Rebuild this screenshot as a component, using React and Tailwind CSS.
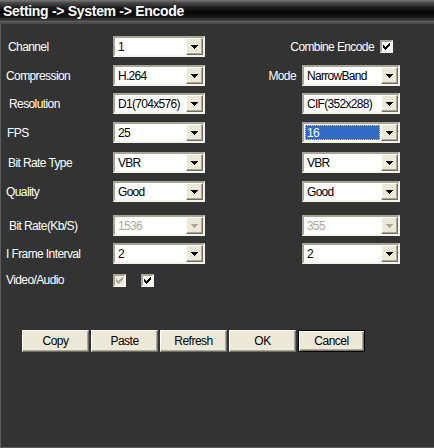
import React from "react";

const FONT = "font-['Liberation_Sans',Arial,sans-serif]";

function Arrow({ disabled }) {
    return (
        <svg width="7" height="4" viewBox="0 0 7 4" shapeRendering="crispEdges">
            <path d="M0 0h7v1H0z M1 1h5v1H1z M2 2h3v1H2z M3 3h1v1H3z" fill={disabled ? "#aca899" : "#000"} />
        </svg>
    );
}

function Check({ color = "#000" }) {
    return (
        <svg width="7" height="7" viewBox="0 0 7 7" shapeRendering="crispEdges">
            <path d="M6 0h1v3H6z M5 1h1v3H5z M4 2h1v3H4z M3 3h1v3H3z M2 4h1v3H2z M1 3h1v3H1z M0 2h1v3H0z" fill={color} />
        </svg>
    );
}

function Select({ value, className, disabled, focused }) {
    return (
        <div className={`flex h-[21px] border-2 border-t-[#a7a596] border-l-[#a7a596] border-b-[#f4f3ec] border-r-[#f4f3ec] bg-white ${className}`}>
            <div className="flex-1 flex items-center px-[1px]">
                <div
                    className={`flex-1 h-[15px] flex items-center pl-[2px] text-[12px] tracking-[-0.7px] leading-none ${
                        focused
                            ? "bg-[#316ac5] text-white outline outline-1 outline-dotted outline-[#e8d27a] -outline-offset-1"
                            : disabled
                            ? "text-[#aca899]"
                            : "text-black"
                    }`}
                >
                    {value}
                </div>
            </div>
            <div className="w-[17px] flex items-center justify-center bg-[#ece9d8] border border-t-white border-l-white border-b-[#716f64] border-r-[#716f64] shadow-[inset_-1px_-1px_0_#aca899]">
                <Arrow disabled={disabled} />
            </div>
        </div>
    );
}

function CheckBox({ disabled }) {
    return (
        <div
            className={`w-[13px] h-[13px] flex items-center justify-center border-2 border-t-[#a7a596] border-l-[#a7a596] border-b-[#f4f3ec] border-r-[#f4f3ec] ${
                disabled ? "bg-[#ece9d8]" : "bg-white"
            }`}
        >
            <Check color={disabled ? "#aca899" : "#000"} />
        </div>
    );
}

function Row({ label, labelPad, left, right, rightLabel, className }) {
    return (
        <div className={`flex items-center h-[21px] ${className}`}>
            <div className={`w-[112px] text-white text-[12px] tracking-[-0.6px] ${labelPad}`}>{label}</div>
            {left}
            <div className="w-[195px] flex items-center justify-end gap-[6px]">
                {rightLabel && <span className="text-white text-[12px] tracking-[-0.6px]">{rightLabel}</span>}
                {right}
            </div>
        </div>
    );
}

const BUTTONS = ["Copy", "Paste", "Refresh", "OK", "Cancel"];

export default function App() {
    return (
        <div className={`w-[434px] h-[448px] bg-[#333333] overflow-hidden flex flex-col ${FONT}`}>
            <div className="h-[22px] shrink-0 flex items-center pl-[3px] bg-[linear-gradient(to_bottom,#7a7a7a_0%,#4a4a4a_12%,#1e1e1e_35%,#050505_55%,#141414_75%,#3a3a3a_92%,#6a6a6a_100%)]">
                <span className="text-white font-bold text-[14px] tracking-[-0.3px] leading-none">Setting -&gt; System -&gt; Encode</span>
            </div>
            <div className="h-[2px] shrink-0 bg-[#4d4d4d]" />
            <div className="flex-1 flex flex-col border-l border-b border-[#5c5c5c] pt-[12px]">
                <Row
                    label="Channel"
                    labelPad="pl-[7px]"
                    left={<Select value="1" className="w-[92px]" />}
                    rightLabel="Combine Encode"
                    right={
                        <div className="mr-[7px]">
                            <CheckBox />
                        </div>
                    }
                />
                <Row
                    className="mt-[8px]"
                    label="Compression"
                    labelPad="pl-[5px]"
                    left={<Select value="H.264" className="w-[92px]" />}
                    rightLabel="Mode"
                    right={<Select value="NarrowBand" className="w-[98px]" />}
                />
                <Row
                    className="mt-[7px]"
                    label="Resolution"
                    labelPad="pl-[8px]"
                    left={<Select value="D1(704x576)" className="w-[92px]" />}
                    right={<Select value="CIF(352x288)" className="w-[98px]" />}
                />
                <Row
                    className="mt-[8px]"
                    label="FPS"
                    labelPad="pl-[6px]"
                    left={<Select value="25" className="w-[92px]" />}
                    right={<Select value="16" focused className="w-[98px]" />}
                />
                <Row
                    className="mt-[9px]"
                    label="Bit Rate Type"
                    labelPad="pl-[7px]"
                    left={<Select value="VBR" className="w-[92px]" />}
                    right={<Select value="VBR" className="w-[98px]" />}
                />
                <Row
                    className="mt-[8px]"
                    label="Quality"
                    labelPad="pl-[5px]"
                    left={<Select value="Good" className="w-[92px]" />}
                    right={<Select value="Good" className="w-[98px]" />}
                />
                <Row
                    className="mt-[13px]"
                    label="Bit Rate(Kb/S)"
                    labelPad="pl-[8px]"
                    left={<Select value="1536" disabled className="w-[92px]" />}
                    right={<Select value="355" disabled className="w-[98px]" />}
                />
                <Row
                    className="mt-[7px]"
                    label="I Frame Interval"
                    labelPad="pl-[5px]"
                    left={<Select value="2" className="w-[92px]" />}
                    right={<Select value="2" className="w-[98px]" />}
                />
                <div className="flex items-center h-[14px] mt-[9px]">
                    <div className="w-[112px] pl-[5px] text-white text-[12px] tracking-[-0.6px]">Video/Audio</div>
                    <CheckBox disabled />
                    <div className="ml-[15px]">
                        <CheckBox />
                    </div>
                </div>
                <div className="flex gap-[2px] pl-[21px] mt-[43px]">
                    {BUTTONS.map((b) => (
                        <button
                            key={b}
                            className={`w-[67px] h-[22px] bg-[#ece9d8] text-black text-[12px] tracking-[-0.5px] flex items-center justify-center ${
                                b === "Cancel"
                                    ? "border border-black shadow-[inset_1px_1px_0_#fff,inset_-1px_-1px_0_#716f64,inset_-2px_-2px_0_#aca899]"
                                    : "border border-t-white border-l-white border-b-[#716f64] border-r-[#716f64] shadow-[inset_-1px_-1px_0_#aca899]"
                            }`}
                        >
                            {b}
                        </button>
                    ))}
                </div>
            </div>
        </div>
    );
}
